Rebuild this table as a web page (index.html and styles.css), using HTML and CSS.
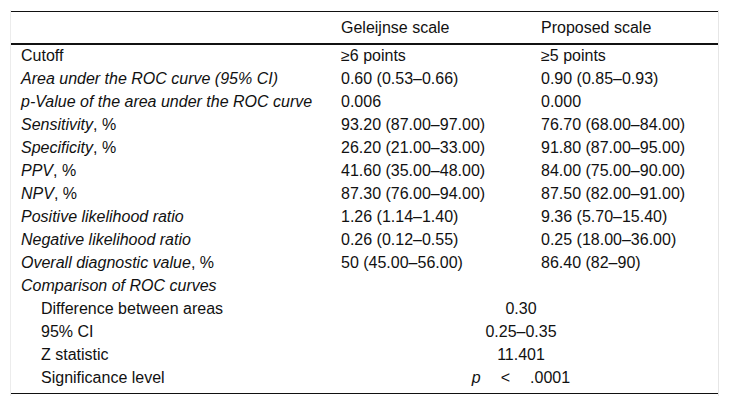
FILE: index.html
```html
<!DOCTYPE html>
<html>
<head>
<meta charset="utf-8">
<link rel="stylesheet" href="styles.css">
</head>
<body>
<div class="wrap">
<table class="data">
<colgroup><col class="c1"><col class="c2"><col class="c3"></colgroup>
<thead>
<tr><th></th><th>Geleijnse scale</th><th>Proposed scale</th></tr>
</thead>
<tbody>
<tr><td>Cutoff</td><td>≥6 points</td><td>≥5 points</td></tr>
<tr><td class="it">Area under the ROC curve (95% CI)</td><td>0.60 (0.53–0.66)</td><td>0.90 (0.85–0.93)</td></tr>
<tr><td class="it">p-Value of the area under the ROC curve</td><td>0.006</td><td>0.000</td></tr>
<tr><td><span class="it">Sensitivity</span>, %</td><td>93.20 (87.00–97.00)</td><td>76.70 (68.00–84.00)</td></tr>
<tr><td><span class="it">Specificity</span>, %</td><td>26.20 (21.00–33.00)</td><td>91.80 (87.00–95.00)</td></tr>
<tr><td><span class="it">PPV</span>, %</td><td>41.60 (35.00–48.00)</td><td>84.00 (75.00–90.00)</td></tr>
<tr><td><span class="it">NPV</span>, %</td><td>87.30 (76.00–94.00)</td><td>87.50 (82.00–91.00)</td></tr>
<tr><td class="it">Positive likelihood ratio</td><td>1.26 (1.14–1.40)</td><td>9.36 (5.70–15.40)</td></tr>
<tr><td class="it">Negative likelihood ratio</td><td>0.26 (0.12–0.55)</td><td>0.25 (18.00–36.00)</td></tr>
<tr><td><span class="it">Overall diagnostic value</span>, %</td><td>50 (45.00–56.00)</td><td>86.40 (82–90)</td></tr>
<tr><td class="it">Comparison of ROC curves</td><td></td><td></td></tr>
<tr><td class="sub">Difference between areas</td><td class="mid" colspan="2">0.30</td></tr>
<tr><td class="sub">95% CI</td><td class="mid" colspan="2">0.25–0.35</td></tr>
<tr><td class="sub">Z statistic</td><td class="mid" colspan="2">11.401</td></tr>
<tr class="last"><td class="sub">Significance level</td><td class="mid" colspan="2"><span class="it">p</span><span class="op">&lt;</span>.0001</td></tr>
</tbody>
</table>
</div>
</body>
</html>
```
FILE: styles.css
```css
html, body {
  margin: 0;
  padding: 0;
  background: #fff;
}
body {
  font-family: "Liberation Sans", Arial, sans-serif;
  font-size: 16px;
  color: #111;
}
.wrap {
  margin: 10px 0 0 10px;
  width: 707px;
  padding: 1px 0 2px;
  border-left: 1px solid #ececec;
  border-right: 1px solid #e6e6e6;
}
.data {
  width: 707px;
  border-collapse: collapse;
  table-layout: fixed;
  border-top: 1px solid #111;
  border-bottom: 1px solid #111;
}
.c1 { width: 320px; }
.c2 { width: 200px; }
.c3 { width: 187px; }
.data th {
  font-weight: normal;
  text-align: left;
  line-height: 19px;
  padding: 6px 0 6px 10px;
  border-bottom: 2px solid #111;
}
.data td {
  line-height: 19px;
  padding: 2px 0 2px 10px;
  white-space: nowrap;
}
.data tbody tr:first-child td { padding-top: 1px; }
.data tr.last td { padding-bottom: 6px; }
.it { font-style: italic; }
.data td.sub { padding-left: 30px; }
.data td.mid {
  text-align: center;
  padding-left: 10px;
  padding-right: 17px;
}
.op { margin: 0 20px; }
```
